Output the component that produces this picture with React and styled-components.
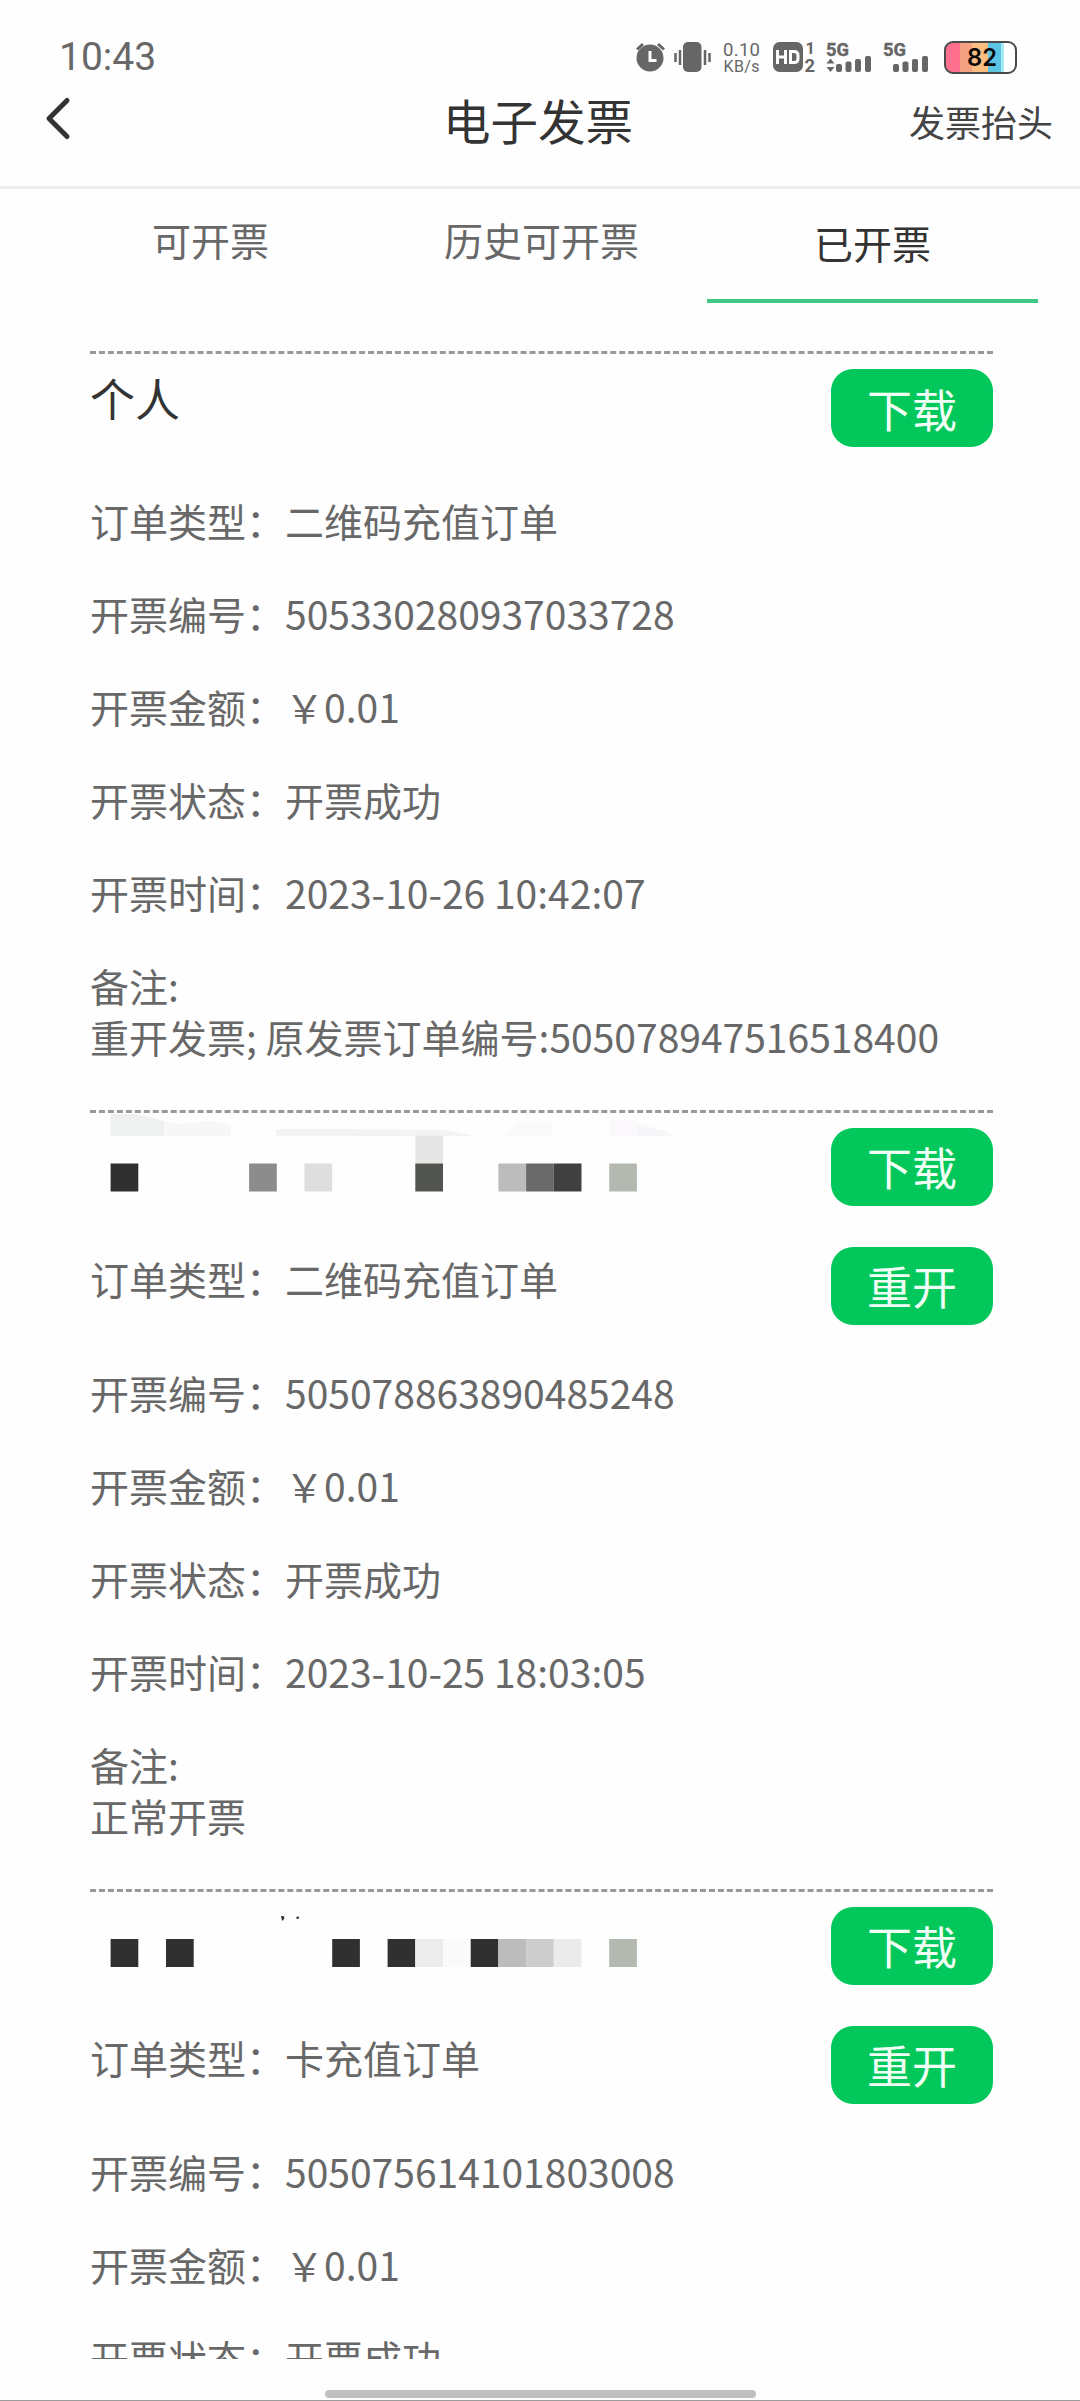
import React from "react";
import styled, { createGlobalStyle } from "styled-components";

const GlobalStyle = createGlobalStyle`
  body {
    margin: 0;
    background: #fefefe;
    font-family: "Noto Sans CJK SC", sans-serif;
  }
  * {
    box-sizing: border-box;
  }
`;

const Page = styled.div`
  display: flex;
  flex-direction: column;
  width: 1080px;
  height: 2401px;
  overflow: hidden;
  background: #fefefe;
  color: #686868;
`;

const StatusBar = styled.div`
  display: flex;
  justify-content: space-between;
  height: 80px;
  padding: 32px 63px 0 59px;
`;

const Clock = styled.span`
  margin-top: 1px;
  font-family: Roboto, sans-serif;
  font-size: 39px;
  line-height: 49px;
  color: #686868;
`;

const StatusIcons = styled.div`
  display: flex;
  height: 44px;
`;

const Glyph = styled.svg`
  display: block;
  flex: none;
  margin-left: ${(props) => props.$gap || 0}px;
  overflow: visible;
  fill: #666666;
  font-family: Roboto, sans-serif;
`;

const Header = styled.header`
  display: grid;
  grid-template-columns: 300px 1fr 300px;
  height: 109px;
  border-bottom: 3px solid #eeeeee;
`;

const BackIcon = styled.svg`
  display: block;
  margin: 15px 0 0 43px;
  fill: none;
  stroke: #333333;
  stroke-width: 5;
  stroke-linecap: round;
  stroke-linejoin: round;
`;

const Title = styled.h1`
  margin: 5px 4px 0 0;
  font-size: 47.5px;
  font-weight: 400;
  line-height: 70px;
  text-align: center;
  color: #333333;
`;

const HeaderLink = styled.span`
  margin: 14px 27px 0 0;
  font-size: 36px;
  line-height: 54px;
  text-align: right;
  color: #444444;
`;

const Tabs = styled.nav`
  display: grid;
  grid-template-columns: repeat(3, 331px);
  height: 162px;
  padding-left: 45px;
`;

const Tab = styled.div`
  height: 114px;
  padding-top: ${(props) => (props.$active ? 24 : 21)}px;
  border-bottom: 4px solid ${(props) => (props.$active ? "#40c685" : "transparent")};
  font-size: 39px;
  line-height: 58px;
  text-align: center;
  color: ${(props) => (props.$active ? "#333333" : "#686868")};
`;

const List = styled.main`
  height: 2008px;
  padding: 0 87px 0 90px;
  overflow: hidden;
`;

const Card = styled.section`
  border-top: 3px dashed #999999;
`;

const CardHead = styled.div`
  display: flex;
  justify-content: space-between;
  height: 121px;
`;

const Name = styled.h2`
  margin: 11px 0 0;
  font-size: 45px;
  font-weight: 400;
  line-height: 66px;
  color: #333333;
`;

const Button = styled.button`
  flex: none;
  width: 162px;
  height: 78px;
  margin-top: ${(props) => props.$top}px;
  padding: 1px 0 0;
  border: 0;
  border-radius: 22px;
  background: #02c75b;
  color: #f0fff6;
  font-family: inherit;
  font-size: 45px;
  line-height: 76px;
`;

const Row = styled.div`
  display: flex;
  justify-content: space-between;
  height: ${(props) => (props.$tall ? 113.5 : 93)}px;
`;

const Text = styled.span`
  margin-top: 15.5px;
  font-size: 39px;
  line-height: 58px;
  white-space: pre;
`;

const Remark = styled.div`
  height: 169.5px;
  padding-top: 19.5px;
  font-size: 39px;
  line-height: 51px;
  white-space: nowrap;
`;

const HomeArea = styled.footer`
  display: flex;
  justify-content: center;
  height: 42px;
  padding-top: 31px;
  border-bottom: 1px solid #9c9c9c;
`;

const HomeBar = styled.div`
  width: 431px;
  height: 8px;
  border-radius: 4px;
  background: #c0c0c0;
`;

const CELL = 27.7;

// blurred-out company names: [column, colour, row]
const masks = {
  second: {
    y: 50.5,
    cells: [
      [0, "#303030"],
      [5, "#8c8c8c"],
      [7, "#dedede"],
      [11, "#e6e6e6", -1],
      [11, "#525450"],
      [14, "#bcbcbc"],
      [15, "#696969"],
      [16, "#404040"],
      [18, "#b3b8b1"],
    ],
    smudges: [
      ["M20.5 1h28l26 7v15h-54z", "#eef1ef"],
      ["M75 8l14 3 32-3 20 4v11H75z", "#f6f7f6"],
      ["M186 16h60l110 1 30 6H186z", "#f2f4f3"],
      ["M412 23l18-15h32v15z", "#fafafa"],
      ["M519 7h25l22 8v8h-47z", "#fbf9fc"],
      ["M547 13l26 4 10 6h-36z", "#f6f6f8"],
    ],
  },
  third: {
    y: 47,
    cells: [
      [0, "#303030"],
      [2, "#303030"],
      [8, "#303030"],
      [10, "#303030"],
      [11, "#ececec"],
      [12, "#fafafa"],
      [13, "#303030"],
      [14, "#bcbcbc"],
      [15, "#cdcdcd"],
      [16, "#ebebeb"],
      [18, "#b3b8b1"],
    ],
    smudges: [
      ["M191 24h2.5l1 2-1.500 2.500h-1z", "#333333"],
      ["M206 25l3-.5v2l-2 .5z", "#333333"],
    ],
  },
};

const invoices = [
  {
    name: "个人",
    type: "二维码充值订单",
    number: "505330280937033728",
    time: "2023-10-26 10:42:07",
    remark: "重开发票; 原发票订单编号:505078947516518400",
  },
  {
    mask: masks.second,
    type: "二维码充值订单",
    number: "505078863890485248",
    time: "2023-10-25 18:03:05",
    remark: "正常开票",
    reissue: true,
  },
  {
    mask: masks.third,
    type: "卡充值订单",
    number: "505075614101803008",
    reissue: true,
  },
];

function NameMask({ mask }) {
  return (
    <svg width="600" height="121">
      {mask.smudges.map(([d, fill]) => (
        <path key={d} d={d} fill={fill} />
      ))}
      {mask.cells.map(([col, fill, row = 0], i) => (
        <rect
          key={i}
          x={20.6 + col * CELL}
          y={mask.y + row * 28}
          width={CELL}
          height="28"
          fill={fill}
        />
      ))}
    </svg>
  );
}

const Signals = styled.div`
  display: flex;
`;

function Signal({ arrows }) {
  return (
    <Glyph $gap={11} width="46" height="44">
      <text
        x="0"
        y="24"
        fontSize="18.500"
        fontWeight="700"
        textLength="23"
        lengthAdjust="spacingAndGlyphs"
        stroke="#666666"
        strokeWidth="0.4"
      >
        5G
      </text>
      {arrows && <path d="M4.500 26.500l4 5h-8zM.5 35h8l-4 5z" />}
      <rect x="10" y="32" width="6" height="8" rx="2" />
      <rect x="19.500" y="29.500" width="6" height="10.500" rx="2" />
      <rect x="29" y="27" width="6" height="13" rx="2" />
      <rect x="39" y="24" width="6" height="16" rx="2" />
    </Glyph>
  );
}

function StatusGlyphs() {
  return (
    <StatusIcons>
      {/* alarm */}
      <Glyph width="30" height="44">
        <circle cx="14" cy="26" r="13.500" />
        <path
          d="M1 17.500l6-5.500M28 17.500l-6-5.500"
          stroke="#666666"
          strokeWidth="3"
        />
        <path d="M14 19v9.500h6.500" fill="none" stroke="#fefefe" strokeWidth="3" />
      </Glyph>
      {/* vibrate */}
      <Glyph $gap={8} width="37" height="44">
        <rect x="9" y="10" width="18.500" height="30" rx="5" />
        <path
          d="M1.500 21v9M6 18v15M31 18v15M35.500 21v9"
          stroke="#666666"
          strokeWidth="2.500"
        />
      </Glyph>
      <Glyph $gap={12} width="37" height="44">
        <text x="0" y="24" fontSize="18.500" textLength="37">
          0.10
        </text>
        <text x="0.500" y="39.500" fontSize="16" textLength="36">
          KB/s
        </text>
      </Glyph>
      {/* HD, sim 1 and 2 */}
      <Glyph $gap={13} width="42" height="44">
        <rect x="0" y="10" width="30" height="30" rx="6.500" />
        <path
          d="M4.500 18v14M12.500 18v14M4.500 25h8M17.500 19.500v11h3.500q4 0 4-4v-3q0-4-4-4z"
          fill="none"
          stroke="#fefefe"
          strokeWidth="3"
        />
        <text x="32.500" y="22" fontSize="16.500" fontWeight="700">
          1
        </text>
        <text x="31.500" y="40" fontSize="18.500" fontWeight="700">
          2
        </text>
      </Glyph>
      <Signals>
        <Signal arrows />
        <Signal />
      </Signals>
      {/* battery */}
      <Glyph $gap={15} width="73" height="44">
        <defs>
          <clipPath id="level">
            <rect x="1.500" y="10.500" width="70" height="30" rx="8" />
          </clipPath>
        </defs>
        <g clipPath="url(#level)">
          <rect x="0" y="9" width="73" height="33" fill="#ffffff" />
          <rect x="0" y="9" width="17" height="33" fill="#ff6f8e" />
          <rect x="16" y="9" width="12" height="33" fill="#f5a283" />
          <rect x="28" y="9" width="16" height="33" fill="#fbbd80" />
          <rect x="44" y="9" width="13" height="33" fill="#5bc4e2" />
          <rect x="57" y="9" width="3" height="33" fill="#a5ecf5" />
        </g>
        <rect
          x="1"
          y="10"
          width="71"
          height="31"
          rx="8"
          fill="none"
          stroke="#4a4a4a"
          strokeWidth="2"
        />
        <text
          x="23"
          y="34"
          fontFamily="Inter, sans-serif"
          fontSize="24.500"
          fontWeight="600"
          fill="#0a0a0a"
          textLength="30"
          lengthAdjust="spacingAndGlyphs"
        >
          82
        </text>
      </Glyph>
    </StatusIcons>
  );
}

function Invoice({ item }) {
  return (
    <Card>
      <CardHead>
        {item.mask ? <NameMask mask={item.mask} /> : <Name>{item.name}</Name>}
        <Button $top={15}>下载</Button>
      </CardHead>
      <Row $tall={item.reissue}>
        <Text>订单类型：{item.type}</Text>
        {item.reissue && <Button $top={13}>重开</Button>}
      </Row>
      <Row>
        <Text>开票编号：{item.number}</Text>
      </Row>
      <Row>
        <Text>开票金额：￥0.01</Text>
      </Row>
      <Row>
        <Text>开票状态：开票成功</Text>
      </Row>
      {item.time && (
        <Row>
          <Text>开票时间：{item.time}</Text>
        </Row>
      )}
      {item.remark && (
        <Remark>
          <div>备注:</div>
          <div>{item.remark}</div>
        </Remark>
      )}
    </Card>
  );
}

function App() {
  return (
    <Page>
      <GlobalStyle />
      <StatusBar>
        <Clock>10:43</Clock>
        <StatusGlyphs />
      </StatusBar>
      <Header>
        <BackIcon width="30" height="48">
          <path d="M24 5.500L6 23.500L24 41.500" />
        </BackIcon>
        <Title>电子发票</Title>
        <HeaderLink>发票抬头</HeaderLink>
      </Header>
      <Tabs>
        <Tab>可开票</Tab>
        <Tab>历史可开票</Tab>
        <Tab $active>已开票</Tab>
      </Tabs>
      <List>
        {invoices.map((item) => (
          <Invoice key={item.number} item={item} />
        ))}
      </List>
      <HomeArea>
        <HomeBar />
      </HomeArea>
    </Page>
  );
}

export default App;
